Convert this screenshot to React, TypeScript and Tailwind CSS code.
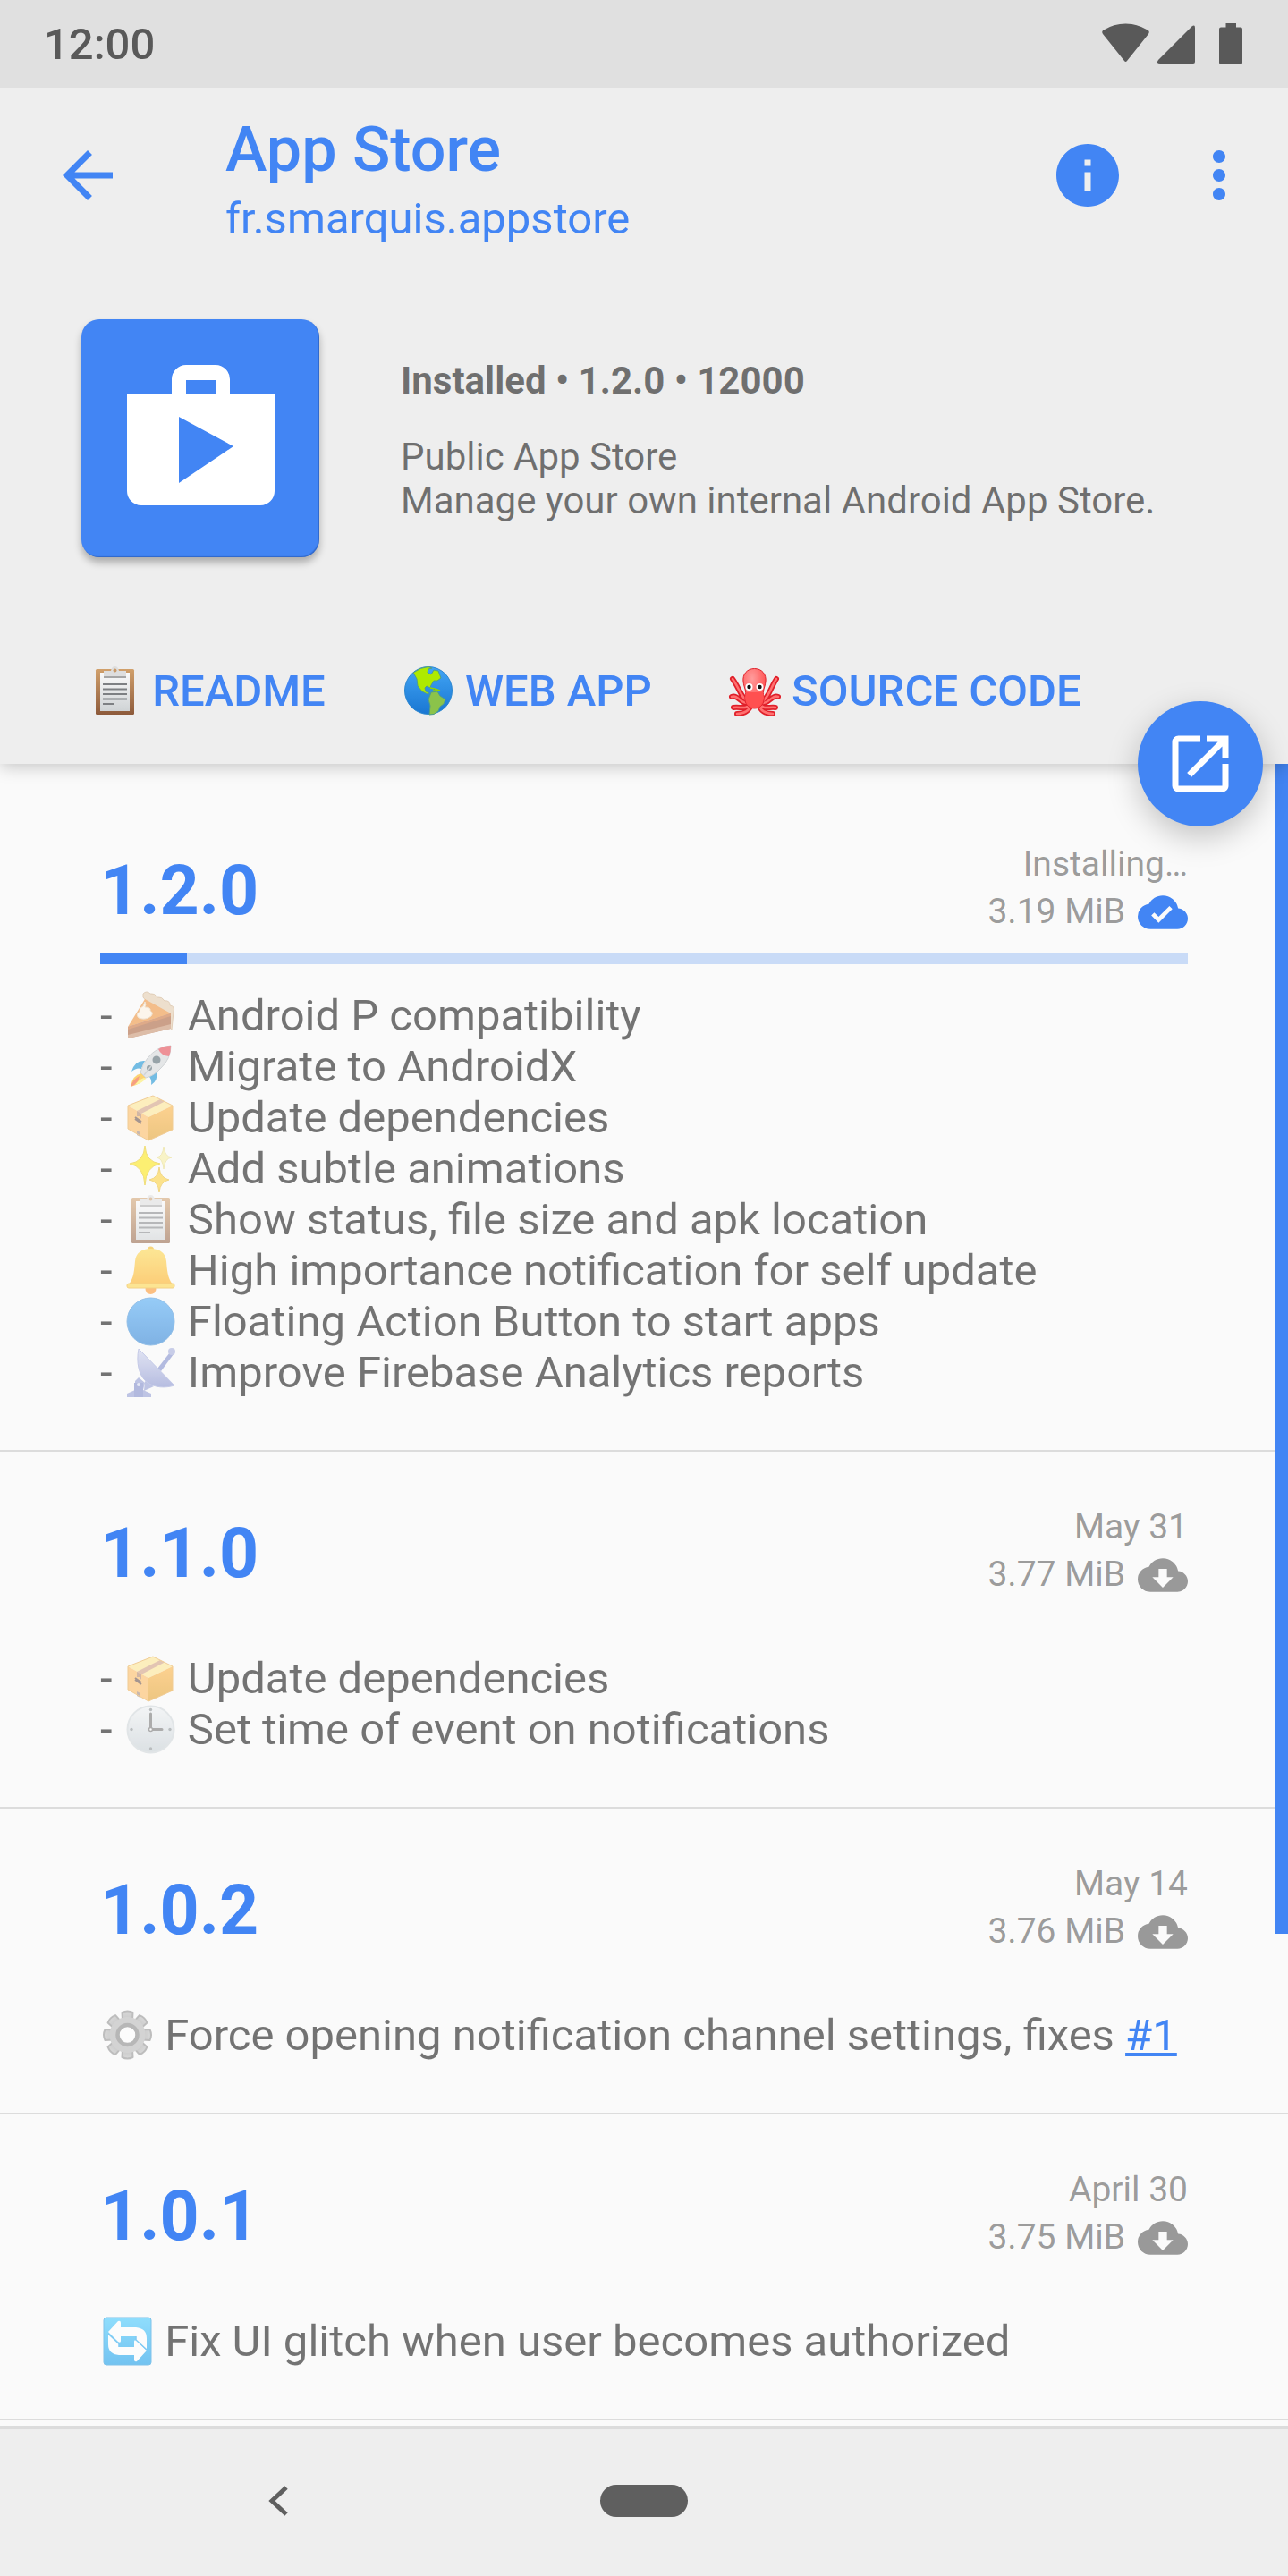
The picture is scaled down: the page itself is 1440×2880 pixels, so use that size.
import type { ReactNode } from "react";
import { MdArrowBack, MdCloudDone, MdCloudDownload, MdInfo, MdMoreVert, MdOpenInNew } from "react-icons/md";

type EmojiName =
  | "pie"
  | "rocket"
  | "package"
  | "sparkles"
  | "clipboard"
  | "bell"
  | "circle"
  | "antenna"
  | "clock"
  | "gear"
  | "refresh"
  | "globe"
  | "octopus";
type Note = { emoji: EmojiName; text: string; link?: string };
type Release = { version: string; status: string; size: string; progress?: number; bullets?: boolean; notes: Note[] };

const releases: Release[] = [
  {
    version: "1.2.0",
    status: "Installing…",
    size: "3.19 MiB",
    progress: 8,
    bullets: true,
    notes: [
      { emoji: "pie", text: "Android P compatibility" },
      { emoji: "rocket", text: "Migrate to AndroidX" },
      { emoji: "package", text: "Update dependencies" },
      { emoji: "sparkles", text: "Add subtle animations" },
      { emoji: "clipboard", text: "Show status, file size and apk location" },
      { emoji: "bell", text: "High importance notification for self update" },
      { emoji: "circle", text: "Floating Action Button to start apps" },
      { emoji: "antenna", text: "Improve Firebase Analytics reports" },
    ],
  },
  {
    version: "1.1.0",
    status: "May 31",
    size: "3.77 MiB",
    bullets: true,
    notes: [
      { emoji: "package", text: "Update dependencies" },
      { emoji: "clock", text: "Set time of event on notifications" },
    ],
  },
  {
    version: "1.0.2",
    status: "May 14",
    size: "3.76 MiB",
    notes: [{ emoji: "gear", text: "Force opening notification channel settings, fixes", link: "#1" }],
  },
  {
    version: "1.0.1",
    status: "April 30",
    size: "3.75 MiB",
    notes: [{ emoji: "refresh", text: "Fix UI glitch when user becomes authorized" }],
  },
];

const links: { emoji: EmojiName; label: string; href: string }[] = [
  { emoji: "clipboard", label: "README", href: "#readme" },
  { emoji: "globe", label: "WEB APP", href: "#web-app" },
  { emoji: "octopus", label: "SOURCE CODE", href: "#source-code" },
];

function Gradient({ id, from, to }: { id: string; from: string; to: string }) {
  return (
    <linearGradient id={id} x1="0" y1="0" x2="0" y2="1">
      <stop offset="0" stopColor={from} />
      <stop offset="1" stopColor={to} />
    </linearGradient>
  );
}

function EmojiGradients() {
  return (
    <svg className="absolute size-0" aria-hidden="true">
      <defs>
        <Gradient id="g-board" from="#d1a06b" to="#8d5a3b" />
        <Gradient id="g-paper" from="#fafafa" to="#cfd3d5" />
        <Gradient id="g-blue" from="#42a5f5" to="#1976d2" />
        <Gradient id="g-bell" from="#ffd640" to="#ffa90c" />
        <Gradient id="g-box" from="#ffb037" to="#e29a1c" />
        <Gradient id="g-clock" from="#eef1f3" to="#c2ccd2" />
        <Gradient id="g-refresh" from="#36c6ff" to="#0295ea" />
        <Gradient id="g-gear" from="#bdbdbd" to="#9e9e9e" />
        <Gradient id="g-dish" from="#cdd2ee" to="#7e8acc" />
        <radialGradient id="g-octopus" cx="0.4" cy="0.25" r="0.7">
          <stop offset="0" stopColor="#ff9c9c" />
          <stop offset="1" stopColor="#ff4b4b" />
        </radialGradient>
      </defs>
    </svg>
  );
}

const gearTeeth = [0, 45, 90, 135, 180, 225, 270, 315];
const octopusArms =
  "M24 41C16 37 14 26 6 15M38 41C46 37 48 26 55 15M24 42C16 44 12 32 5 35M38 42C46 44 50 32 57 35M26 42C22 50 16 46 7 47M36 42C40 50 46 46 54 47M27 42C26 51 18 54 11 54M35 42C36 51 44 54 51 54";

const emojiArt: Record<EmojiName, ReactNode> = {
  pie: (
    <>
      <path d="M22 4Q26 0 30 4Q35 3 38 8Q43 7 46 12Q52 11 52 17Q58 18 56 24L54 44L22 8Z" fill="#e3c9a8" stroke="#cdab84" strokeWidth="1" />
      <path d="M24 10L53 26L5 41Z" fill="#ee8a2c" />
      <path d="M5 41L53 26V43L5 54Z" fill="#a4552a" />
      <path d="M5 50L53 38V43L5 54Z" fill="#c58a63" />
      <path d="M5 41L53 26V29L5 44Z" fill="#c8672a" />
      <path d="M24 13Q26 16 24 19Q31 19 30 23Q34 25 31 29Q25 34 17 31Q13 27 18 24Q17 20 22 18Z" fill="#fff2e0" stroke="#e8cfae" strokeWidth="1" />
    </>
  ),
  rocket: (
    <>
      <path d="M20 36Q10 38 8 51Q20 48 25 41Z" fill="#ffb300" />
      <path d="M18 39Q11 42 8 51Q13 49 16 45Z" fill="#f4511e" />
      <path d="M23 41Q17 43 13 49Q21 47 25 42Z" fill="#ffee58" />
      <path d="M24 22Q13 21 9 34Q15 29 20 31Z" fill="#0288d1" />
      <path d="M37 34Q39 44 31 49Q32 42 28 39Z" fill="#0288d1" />
      <path d="M53 5Q37 6 27 19Q21 26 19 35L25 41Q34 39 42 30Q53 20 53 5Z" fill="#d3d6d8" stroke="#aeb4b8" strokeWidth="1" />
      <path d="M53 5Q46 5 39 9Q42 16 51 17Q53 12 53 5Z" fill="#e53945" />
      <circle cx="37" cy="21" r="4.500" fill="#455a64" />
      <circle cx="29" cy="30" r="3" fill="#455a64" />
      <path d="M23 38L31 28" stroke="#b0b6ba" strokeWidth="1.500" />
    </>
  ),
  package: (
    <>
      <path d="M33 4L55 15L28 28L5 15Z" fill="#ffe48a" />
      <path d="M5 15L28 28V54L5 41Z" fill="#ffb656" />
      <path d="M55 15L28 28V54L55 42Z" fill="url(#g-box)" />
      <path d="M41 8L46 10.500L20 24L15 21Z" fill="#cf9a78" />
      <path d="M15 21L20 24V30L18 27L15 27Z" fill="#b07d5f" />
      <path d="M13 28L20 33M13 30L20 35" stroke="#5d4037" strokeWidth="2" />
      <path d="M15 43L19 45V50L15 48Z" fill="#9e8270" />
      <path d="M33 4L55 15V42L28 54L5 41V15Z" fill="none" stroke="#e8a640" strokeWidth="1" />
    </>
  ),
  sparkles: (
    <>
      <path d="M24 3Q25 21 41 23Q25 26 24 47Q23 26 7 23Q23 21 24 3Z" fill="#ffe600" stroke="#e8c400" strokeWidth="1" />
      <path d="M45 4Q46 15 54 16Q46 17 45 29Q44 17 37 16Q44 15 45 4Z" fill="#f8ee9c" stroke="#e8dc80" strokeWidth="1" />
      <path d="M40 27Q41 39 51 41Q41 43 40 55Q39 43 29 41Q39 39 40 27Z" fill="#ffcf2e" stroke="#e8b820" strokeWidth="1" />
    </>
  ),
  clipboard: (
    <>
      <rect x="9" y="4" width="43" height="51" rx="1.500" fill="url(#g-board)" />
      <rect x="14" y="8" width="33" height="43" fill="url(#g-paper)" />
      <path d="M18 6H26Q27 1 30.500 1Q34 1 35 6H43V14H18Z" fill="#dedede" />
      <path d="M18 12H43V14H18Z" fill="#a6a6a6" />
      <circle cx="30.500" cy="5.500" r="2" fill="#c99a68" />
      <path d="M17 21H44M17 26.500H44M17 32H44M17 37.500H44M17 43H30" stroke="#7d8083" strokeWidth="2" />
    </>
  ),
  bell: (
    <>
      <circle cx="30.500" cy="49" r="6" fill="#ff8f1c" />
      <circle cx="30.500" cy="5" r="3.500" fill="#f5b512" />
      <path d="M30.500 4C41 4 47 9 48 18C49 28 49 36 55 44H6C12 36 12 28 13 18C14 9 20 4 30.500 4Z" fill="url(#g-bell)" />
      <rect x="4" y="43" width="53" height="5" rx="2" fill="#ffd23c" stroke="#eeb020" strokeWidth="1" />
    </>
  ),
  circle: <circle cx="30.500" cy="28.500" r="26.500" fill="url(#g-blue)" stroke="#3d8ed8" strokeWidth="1" />,
  antenna: (
    <>
      <path d="M38 24L52 6L56 8L42 27Z" fill="#7986cb" />
      <circle cx="54" cy="5" r="4" fill="#9fa8da" />
      <path d="M4 56V52L13 48V38L17 34L24 40L22 48L31 52V56Z" fill="#8c97d2" />
      <path d="M12 40H22V56H12Z" fill="#7784c8" />
      <path d="M24 38L34 44L23 49Z" fill="#8c97d2" />
      <path d="M17 2C14 17 17 32 26 39C35 46 47 46 57 43Z" fill="url(#g-dish)" stroke="#97a1d8" strokeWidth="1" />
      <circle cx="17" cy="42" r="2" fill="#d5d9f0" />
    </>
  ),
  clock: (
    <>
      <circle cx="30.500" cy="28.500" r="26" fill="url(#g-clock)" stroke="#cdd4d8" strokeWidth="2" />
      <path d="M30.500 26V11M33 28.500H43" stroke="#6b6b6b" strokeWidth="3" strokeLinecap="round" />
      <circle cx="30.500" cy="28.500" r="2" fill="#fff" stroke="#6b6b6b" strokeWidth="1.500" />
      <g fill="#848a8e">
        <circle cx="30.500" cy="6.500" r="1.700" />
        <circle cx="30.500" cy="50" r="1.700" />
        <circle cx="9" cy="28.500" r="1.700" />
        <circle cx="52" cy="28.500" r="1.700" />
      </g>
    </>
  ),
  gear: (
    <>
      <g fill="url(#g-gear)" stroke="#8a8a8a" strokeWidth="2" strokeLinejoin="round">
        {gearTeeth.map((angle) => (
          <path key={angle} d="M25 12L24.500 3Q30.500 0 36.500 3L36 12Z" transform={`rotate(${angle} 30.500 28)`} />
        ))}
      </g>
      <circle cx="30.500" cy="28" r="20" fill="#b4b4b4" />
      <circle cx="30.500" cy="28" r="11" fill="#fff" stroke="#808080" strokeWidth="4.500" />
    </>
  ),
  refresh: (
    <>
      <rect x="4" y="2" width="53" height="53" rx="3" fill="url(#g-refresh)" stroke="#1b96dd" strokeWidth="1" />
      <path d="M9 18L20 6Q23 5 23 8V13H40Q52 14 52 25V38L40 27V23H23V28Q23 31 20 29Z" fill="#fff" />
      <path d="M52 39L41 51Q38 52 38 49V44H21Q9 43 9 32V21L21 31V35H38V29Q38 26 41 28Z" fill="#fff" />
      <path d="M9 20L21 31.500V35" fill="none" stroke="#1ba3ee" strokeWidth="1.500" />
      <path d="M52 38L40 27V23" fill="none" stroke="#1ba3ee" strokeWidth="1.500" />
    </>
  ),
  globe: (
    <>
      <circle cx="31" cy="28" r="26.500" fill="url(#g-blue)" stroke="#2b86cf" strokeWidth="1" />
      <path
        d="M14 8Q22 2 31 1.500L35 3L31 4L30 8L34 10L37 5L42 6L45 14L41 17L37 17L34 22L33 25L29 23L27 25L28 29L32 31L30 32L24 29L19 23L18 15Z"
        fill="#aeea00"
        stroke="#4f9d8a"
        strokeWidth="1"
      />
      <path d="M33 25L38 26L44 28M36 28H41" stroke="#8fd400" strokeWidth="1.500" />
      <path d="M34 30L41 29L44 34L50 38L48 43L44 46L42 51L37 54.500L32 55L33 45L31 38Z" fill="#8bc34a" stroke="#4f9d8a" strokeWidth="1" />
    </>
  ),
  octopus: (
    <>
      <path d={octopusArms} fill="none" stroke="#e0202a" strokeWidth="6" strokeLinecap="round" />
      <path d={octopusArms} fill="none" stroke="#ff7070" strokeWidth="2.500" strokeLinecap="round" />
      <path
        d="M30.500 3.500C39 3.500 44 10 43 18C42 26 39 28 41 35C42 42 38 48 30.500 48C23 48 19 42 20 35C22 28 19 26 18 18C17 10 22 3.500 30.500 3.500Z"
        fill="url(#g-octopus)"
        stroke="#e0202a"
        strokeWidth="1"
      />
      <path d="M20 36Q22 46 30.500 47Q39 46 41 36L40 30H21Z" fill="#ff5050" />
      <circle cx="24.500" cy="24" r="4" fill="#fff" />
      <circle cx="36.500" cy="24" r="4" fill="#fff" />
      <circle cx="24.500" cy="24" r="2.200" fill="#111" />
      <circle cx="36.500" cy="24" r="2.200" fill="#111" />
    </>
  ),
};

function Emoji({ name }: { name: EmojiName }) {
  return (
    <svg width="60" height="56" viewBox="0 0 60 56" className="inline-block align-[-11px]" role="img" aria-label={name}>
      {emojiArt[name]}
    </svg>
  );
}

function StatusBar() {
  return (
    <div className="relative z-20 flex h-[98px] items-center justify-between bg-[#e0e0e0] px-[49px] text-[#595959]">
      <span className="text-[49px] leading-[57px] font-medium">12:00</span>
      <svg width="160" height="48" viewBox="0 0 160 48" fill="currentColor" role="img" aria-label="Wi-Fi, signal, battery">
        <path d="M2 13Q0 10 3 8.500Q14 1.500 27.500 1.500Q41 1.500 52 8.500Q55 10 53 13L29 43Q27.500 45 26 43Z" />
        <path d="M101.500 4.500Q105 2 105 6V44Q105 46 103 46H66Q61 46 64 42Z" />
        <path d="M139.500 1H151V5.500H156Q158 5.500 158 7.500V45Q158 47 156 47H134Q132 47 132 45V7.500Q132 5.500 134 5.500H139.500Z" />
      </svg>
    </div>
  );
}

function AppLogo() {
  return (
    <div className="size-[266px] shrink-0 overflow-hidden rounded-[20px] bg-[#4285f4] shadow-[0_6px_8px_rgba(0,0,0,0.28),inset_-1px_-1px_1px_rgba(20,60,140,0.4)]">
      <svg width="266" height="266" viewBox="0 0 266 266" role="img" aria-label="App Store logo">
        <path
          fill="#fff"
          fillRule="evenodd"
          d="M51 84H101V67A16 16 0 0 1 117 51H150A16 16 0 0 1 166 67V84H216V192A16 16 0 0 1 200 208H67A16 16 0 0 1 51 192ZM117 68V84H150V68ZM109 109V183L170 142Z"
        />
      </svg>
    </div>
  );
}

function ReleaseItem({ release }: { release: Release }) {
  return (
    <article className="border-b-2 border-[#dcdcdc] px-[112px] pb-[58px]">
      <div className="flex h-[184px] items-start justify-between">
        <h2 className="pt-[69px] text-[77px] leading-[90px] font-bold text-[#4285f4]">{release.version}</h2>
        <div className="flex flex-col items-end pt-[58px] text-[39px] leading-[53px] text-black/40">
          <span>{release.status}</span>
          <span className="flex h-[53px] items-center gap-3.5">
            {release.size}
            {release.progress !== undefined ? (
              <MdCloudDone className="size-[56px] text-[#4285f4]" />
            ) : (
              <MdCloudDownload className="size-[56px] text-[#999]" />
            )}
          </span>
        </div>
      </div>
      <div className="mb-[29px] h-3">
        {release.progress !== undefined && (
          <div className="h-3 bg-[#c9dbf7]" role="progressbar" aria-label="Install progress" aria-valuenow={release.progress}>
            <div className="h-3 bg-[#4285f4]" style={{ width: `${release.progress}%` }} />
          </div>
        )}
      </div>
      <ul className="text-[49px] leading-[57px] text-black/54">
        {release.notes.map((note) => (
          <li key={note.text}>
            {release.bullets && "- "}
            <span className="opacity-54">
              <Emoji name={note.emoji} />
            </span>{" "}
            {note.text}
            {note.link && (
              <>
                {" "}
                <a href="#issue-1" className="text-[#4285f4] underline">
                  {note.link}
                </a>
              </>
            )}
          </li>
        ))}
      </ul>
    </article>
  );
}

export default function App() {
  return (
    <div className="flex min-h-screen flex-col bg-[#fafafa] font-[Roboto,sans-serif]">
      <EmojiGradients />
      <StatusBar />
      <header className="relative z-10 bg-[#eee] shadow-[0_3px_18px_rgba(0,0,0,0.22)]">
        <div className="flex h-[196px] items-center pr-[35px] pl-[56px] text-[#4285f4]">
          <button aria-label="Back">
            <MdArrowBack className="size-[84px]" />
          </button>
          <div className="ml-[112px] flex-1 pt-1.5">
            <h1 className="mb-2 text-[70px] leading-[82px] font-medium">App Store</h1>
            <p className="text-[49px] leading-[57px]">fr.smarquis.appstore</p>
          </div>
          <button aria-label="App info">
            <MdInfo className="size-[84px]" />
          </button>
          <button aria-label="More options" className="ml-[63px]">
            <MdMoreVert className="size-[84px]" />
          </button>
        </div>
        <section className="flex items-center gap-[91px] px-[91px] pt-[63px] text-[42px] leading-[49px] text-black/54">
          <AppLogo />
          <div className="pt-1">
            <p className="mb-9 font-bold">Installed • 1.2.0 • 12000</p>
            <p>Public App Store</p>
            <p>Manage your own internal Android App Store.</p>
          </div>
        </section>
        <nav className="flex gap-[84px] pt-[121px] pb-[53px] pl-[98px] text-[49px] leading-[57px] font-medium text-[#4285f4]">
          {links.map((link) => (
            <a key={link.label} href={link.href}>
              <Emoji name={link.emoji} /> {link.label}
            </a>
          ))}
        </nav>
        <button
          aria-label="Open app"
          className="absolute right-7 -bottom-[70px] z-10 flex size-[140px] items-center justify-center rounded-full bg-[#4285f4] text-white shadow-[0_12px_35px_rgba(0,0,0,0.22)]"
        >
          <MdOpenInNew className="size-[84px]" />
        </button>
      </header>
      <main className="relative flex-1 pt-7 pb-1.5">
        {releases.map((release) => (
          <ReleaseItem key={release.version} release={release} />
        ))}
        <div className="absolute top-0 right-0 h-[70.4%] w-3.5 bg-[#4285f4]" />
      </main>
      <footer className="grid h-[168px] grid-cols-7 items-center border-t-4 border-[#dcdcdc] bg-[#eee] pb-1 text-[#5f5f5f]">
        <button aria-label="Back" className="col-start-2 justify-self-center">
          <svg width="84" height="84" viewBox="0 0 84 84" fill="none" stroke="currentColor" strokeWidth="5">
            <path d="M53 27L37 42L53 57" />
          </svg>
        </button>
        <button aria-label="Home" className="col-start-4 h-9 w-[98px] justify-self-center rounded-full bg-[#5f5f5f]" />
      </footer>
    </div>
  );
}
